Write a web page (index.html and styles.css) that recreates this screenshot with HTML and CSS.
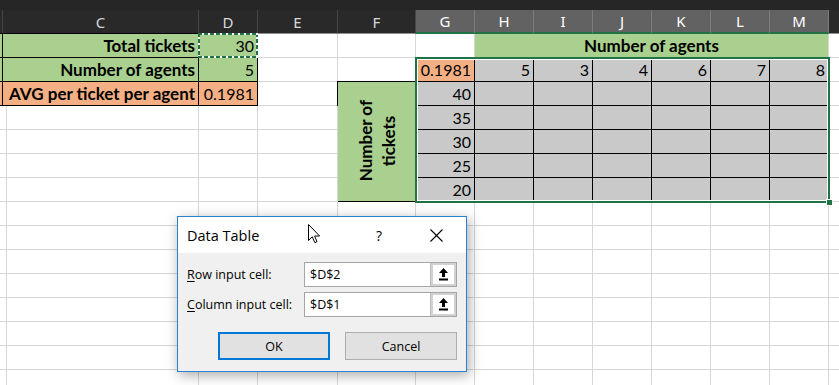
FILE: index.html
```html
<!DOCTYPE html>
<html lang="en">

<head>
    <meta charset="UTF-8">
    <meta name="viewport" content="width=device-width, initial-scale=1.0">
    <title>Data Table</title>
    <link rel="stylesheet" href="styles.css">
</head>

<body>
    <div class="app">
        <div class="topbar"></div>
        <div class="sheet" id="sheet"></div>

        <!-- copy marquee on D1 and the selected range G2:M7 -->
        <div class="ants"></div>
        <div class="selection"><span class="handle"></span></div>

        <div class="dialog">
            <div class="dlg-title">
                <span class="dlg-name">Data Table</span>
                <span class="dlg-help">?</span>
                <svg class="dlg-close" width="13" height="13" viewBox="0 0 13 13">
                    <path d="M0.5 0.5 L12.5 12.5 M12.5 0.5 L0.5 12.5" stroke="#000" stroke-width="1.1" fill="none" />
                </svg>
            </div>
            <div class="dlg-body">
                <div class="dlg-form">
                    <label><u>R</u>ow input cell:</label>
                    <div class="ref">
                        <span class="ref-text">$D$2</span>
                        <span class="pick">
                            <svg width="9" height="13" viewBox="0 0 9 13">
                                <path d="M4.5 0 L9 5 L6 5 L6 9 L3 9 L3 5 L0 5 Z M0 10.5 H9 V12.5 H0 Z" fill="#000" />
                            </svg>
                        </span>
                    </div>
                    <label><u>C</u>olumn input cell:</label>
                    <div class="ref">
                        <span class="ref-text">$D$1</span>
                        <span class="pick">
                            <svg width="9" height="13" viewBox="0 0 9 13">
                                <path d="M4.5 0 L9 5 L6 5 L6 9 L3 9 L3 5 L0 5 Z M0 10.5 H9 V12.5 H0 Z" fill="#000" />
                            </svg>
                        </span>
                    </div>
                </div>
                <div class="dlg-buttons">
                    <button class="btn default">OK</button>
                    <button class="btn">Cancel</button>
                </div>
            </div>
            <svg class="cursor" width="13" height="20" viewBox="0 0 13 20">
                <path d="M0.5 0.5 L0.5 16.5 L4.3 12.8 L6.8 18.6 L9 17.6 L6.6 12 L11.6 12 Z" fill="#fff" stroke="#000" stroke-width="1" stroke-linejoin="round" />
            </svg>
        </div>
    </div>

    <script>
const cols = ['B', 'C', 'D', 'E', 'F', 'G', 'H', 'I', 'J', 'K', 'L', 'M', 'N'];
const selected = ['G', 'H', 'I', 'J', 'K', 'L', 'M'];
const rowCount = 15;

// address -> [html, classes, colSpan, rowSpan]
const cells = {
    B1: ['', 'green box'],
    C1: ['Total tickets', 'green box bold'],
    D1: ['30', 'green box'],
    B2: ['', 'green box'],
    C2: ['Number of agents', 'green box bold'],
    D2: ['5', 'green box'],
    B3: ['', 'orange box'],
    C3: ['AVG per ticket per agent', 'orange box bold'],
    D3: ['0.1981', 'orange box'],
    H1: ['Number of agents', 'green bold center', 6, 1],
    F3: ['<span>Number of<br>tickets</span>', 'green box bold vert', 1, 5],
    G2: ['0.1981', 'orange box']
};

const agents = [5, 3, 4, 6, 7, 8];
const tickets = [40, 35, 30, 25, 20];
['H', 'I', 'J', 'K', 'L', 'M'].forEach((c, i) => {
    cells[c + 2] = [String(agents[i]), 'grey box'];
    for (let r = 3; r <= 7; r++)
        cells[c + r] = ['', 'grey box'];
});
tickets.forEach((t, i) => {
    cells['G' + (i + 3)] = [String(t), 'grey box'];
});

// cells hidden under merged ranges
const covered = ['I1', 'J1', 'K1', 'L1', 'M1', 'F4', 'F5', 'F6', 'F7'];

const sheet = document.querySelector('#sheet');

for (const c of cols) {
    const head = document.createElement('div');
    head.className = selected.includes(c) ? 'head active' : 'head';
    head.textContent = (c === 'B' || c === 'N') ? '' : c;
    sheet.appendChild(head);
}

for (let r = 1; r <= rowCount; r++) {
    for (const c of cols) {
        const addr = c + r;
        if (covered.includes(addr))
            continue;
        const cell = document.createElement('div');
        cell.className = 'cell';
        const data = cells[addr];
        if (data) {
            cell.innerHTML = data[0];
            cell.className += ' ' + data[1];
            if (data[2] > 1)
                cell.style.gridColumn = 'span ' + data[2];
            if (data[3] > 1)
                cell.style.gridRow = 'span ' + data[3];
        }
        sheet.appendChild(cell);
    }
}
    </script>
</body>

</html>
```

FILE: styles.css
```css
* {
    margin: 0;
    padding: 0;
    box-sizing: border-box;
}

body {
    background-color: #ffffff;
    width: 839px;
    height: 385px;
    overflow: hidden;
}

.app {
    position: relative;
    width: 839px;
    height: 385px;
    overflow: hidden;
}

.topbar {
    height: 10px;
    background-color: #262626;
}

/* spreadsheet */
.sheet {
    display: grid;
    grid-template-columns: 3px 196px 59px 80px 78px repeat(8, 59px);
    grid-auto-rows: 24px;
}

.head {
    background-color: #292929;
    color: #d9d9d9;
    border-right: 1px solid #454545;
    border-bottom: 1px solid #8e8e8e;
    font-family: "Noto Sans", sans-serif;
    font-size: 15px;
    display: flex;
    align-items: center;
    justify-content: center;
    overflow: hidden;
}

.head.active {
    background-color: #626262;
    color: #ffffff;
    border-right-color: #7c7c7c;
    border-bottom: 2px solid #217346;
}

.cell {
    border-right: 1px solid #d6d6d6;
    border-bottom: 1px solid #d6d6d6;
    display: flex;
    align-items: flex-end;
    justify-content: flex-end;
    padding: 0 3px 1px 3px;
    font-family: Lato, "Liberation Sans", sans-serif;
    font-size: 16px;
    line-height: 20px;
    color: #000;
    white-space: nowrap;
    overflow: hidden;
}

.box {
    border-color: #000;
    box-shadow: -1px -1px 0 #000;
}

.green {
    background-color: #a9d08e;
}

.orange {
    background-color: #f4b084;
}

.grey {
    background-color: #c9c9c9;
}

.bold {
    font-size: 17px;
    font-weight: 700;
}

.center {
    justify-content: center;
}

.vert {
    align-items: center;
    justify-content: center;
}

.vert span {
    writing-mode: vertical-rl;
    transform: rotate(180deg);
    text-align: center;
    line-height: 23px;
}

.ants {
    position: absolute;
    left: 198px;
    top: 33px;
    width: 60px;
    height: 25px;
    background:
        repeating-linear-gradient(90deg, #217346 0 4px, #fff 4px 6px) top / 100% 2px no-repeat,
        repeating-linear-gradient(90deg, #217346 0 4px, #fff 4px 6px) bottom / 100% 2px no-repeat,
        repeating-linear-gradient(180deg, #217346 0 4px, #fff 4px 6px) left / 2px 100% no-repeat,
        repeating-linear-gradient(180deg, #217346 0 4px, #fff 4px 6px) right / 2px 100% no-repeat;
}

.selection {
    position: absolute;
    left: 415px;
    top: 57px;
    width: 415px;
    height: 146px;
    border: 2px solid #217346;
    box-shadow: inset 0 0 0 1px #ffffff;
}

.handle {
    position: absolute;
    right: -5px;
    bottom: -5px;
    width: 7px;
    height: 7px;
    background-color: #217346;
    border: 1px solid #ffffff;
}

/* Data Table dialog */
.dialog {
    position: absolute;
    left: 177px;
    top: 216px;
    width: 290px;
    height: 156px;
    border: 1px solid #2a80d2;
    background-color: #f0f0f0;
    box-shadow: 2px 3px 12px rgba(0, 0, 0, 0.35);
    font-family: "Open Sans", "Noto Sans", sans-serif;
    color: #000;
}

.dlg-title {
    height: 36px;
    background-color: #ffffff;
    display: flex;
    align-items: center;
    padding-left: 9px;
}

.dlg-name {
    font-size: 14.5px;
    margin-top: 1px;
}

.dlg-help {
    margin-left: auto;
    width: 14px;
    text-align: center;
    font-size: 14px;
    margin-right: 44px;
}

.dlg-close {
    margin-right: 23px;
    margin-top: 1px;
}

.dlg-body {
    padding: 9px 9px 0 9px;
}

.dlg-form {
    display: grid;
    grid-template-columns: 117px 153px;
    row-gap: 5px;
    align-items: center;
}

.dlg-form label {
    font-size: 12.5px;
}

.dlg-form u {
    text-underline-offset: 2px;
}

.ref {
    height: 25px;
    background-color: #ffffff;
    border: 1px solid #a5a5a5;
    display: flex;
    align-items: stretch;
}

.ref-text {
    flex: 1;
    font-size: 12.5px;
    padding-left: 5px;
    display: flex;
    align-items: center;
}

.pick {
    width: 26px;
    border-left: 1px solid #bcbcbc;
    background-color: #ffffff;
    box-shadow: inset 0 0 0 2px #d2d2d2;
    display: flex;
    align-items: center;
    justify-content: center;
}

.dlg-buttons {
    display: flex;
    justify-content: flex-end;
    gap: 15px;
    margin-top: 15px;
}

.btn {
    width: 112px;
    height: 28px;
    background-color: #e1e1e1;
    border: 1px solid #adadad;
    font-family: "Open Sans", "Noto Sans", sans-serif;
    font-size: 12.5px;
    color: #000;
}

.btn.default {
    border: 2px solid #0078d7;
}

.cursor {
    position: absolute;
    left: 130px;
    top: 7px;
}
```
